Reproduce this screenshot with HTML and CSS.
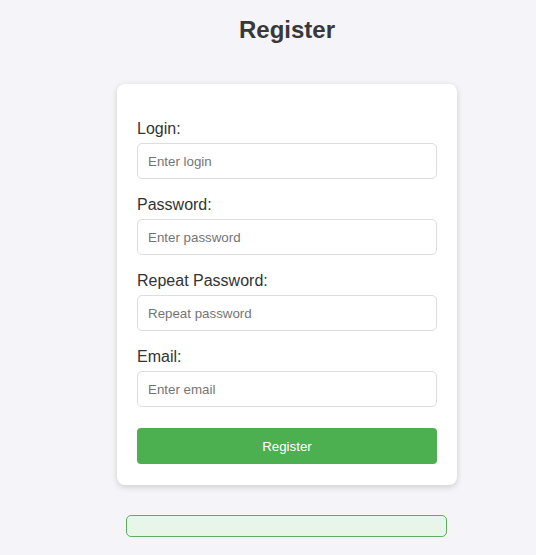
FILE: index.html
```html
<!DOCTYPE html>
<html lang="en">
<head>
<meta charset="utf-8">
<title>Register</title>
<link rel="stylesheet" href="styles.css">
</head>
<body>
<div class="page">
  <h1 class="title">Register</h1>
  <form class="card">
    <label class="label" for="login">Login:</label>
    <input class="field" id="login" type="text" placeholder="Enter login">
    <label class="label" for="password">Password:</label>
    <input class="field" id="password" type="password" placeholder="Enter password">
    <label class="label" for="repeat">Repeat Password:</label>
    <input class="field" id="repeat" type="password" placeholder="Repeat password">
    <label class="label" for="email">Email:</label>
    <input class="field" id="email" type="email" placeholder="Enter email">
    <button class="submit" type="button">Register</button>
  </form>
  <div class="message"></div>
</div>
</body>
</html>
```
FILE: styles.css
```css
html, body {
  margin: 0;
  padding: 0;
  background: #f4f4f9;
  font-family: "Liberation Sans", Arial, sans-serif;
  color: #333;
}
.page {
  width: 340px;
  margin-left: 117px;
  padding-top: 16px;
  display: flex;
  flex-direction: column;
}
.title {
  margin: 0;
  font-size: 24px;
  line-height: 28px;
  font-weight: bold;
  text-align: center;
  color: #383838;
}
.card {
  margin-top: 40px;
  background: #fff;
  border-radius: 8px;
  box-shadow: 0 2px 6px rgba(0, 0, 0, 0.16);
  padding: 36px 20px 21px;
  display: flex;
  flex-direction: column;
}
.label {
  display: block;
  font-size: 16px;
  line-height: 18px;
  margin-bottom: 5px;
  color: #333;
}
.field {
  box-sizing: border-box;
  width: 100%;
  height: 36px;
  margin: 0 0 17px;
  padding: 0 10px;
  border: 1px solid #ddd;
  border-radius: 5px;
  font-family: "Liberation Sans", Arial, sans-serif;
  font-size: 13.333px;
  color: #333;
  background: #fff;
}
.field::placeholder {
  color: #757575;
}
.submit {
  margin-top: 4px;
  height: 36px;
  width: 100%;
  border: none;
  border-radius: 4px;
  background: #4caf50;
  color: #fff;
  font-family: "Liberation Sans", Arial, sans-serif;
  font-size: 13.333px;
}
.message {
  margin-top: 30px;
  margin-left: 9px;
  width: 321px;
  height: 22px;
  box-sizing: border-box;
  background: #e8f5e9;
  border: 1px solid #5fae62;
  border-radius: 5px;
}
```
